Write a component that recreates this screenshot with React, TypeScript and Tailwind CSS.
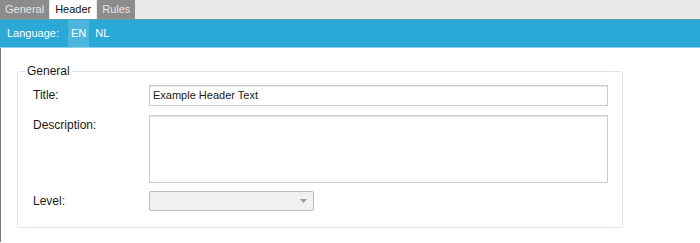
import React from 'react';

const tabs = ['General', 'Header', 'Rules'];

const App: React.FC = () => {
  const active = 'Header';

  return (
    <div className="w-[700px] h-[243px] bg-white overflow-hidden text-[12px] text-[#1a1a1a]" style={{ fontFamily: '"Liberation Sans", Arial, sans-serif' }}>
      {/* tab strip */}
      <div className="h-[20px] bg-[#e9e9e9] flex items-end border-b border-[#5f9fb8]">
        {tabs.map((tab) => (
          <div
            key={tab}
            className={
              tab === active
                ? 'h-[19px] px-[5px] bg-white text-[#111] flex items-center text-[11px] mr-[1px]'
                : 'h-[19px] px-[5px] bg-[#8c8c8c] text-[#e6e6e6] flex items-center text-[11px] mr-[1px]'
            }
          >
            {tab}
          </div>
        ))}
      </div>

      {/* language bar */}
      <div className="h-[28px] bg-[#2aa8d6] border-b border-[#8fd0ea] flex items-stretch text-white text-[11px]">
        <span className="flex items-center pl-[7px] pr-[9px]">Language:</span>
        <span className="flex items-center px-[3px] bg-[#4cb6de]">EN</span>
        <span className="flex items-center px-[6px]">NL</span>
      </div>

      {/* content */}
      <div className="border-l border-[#7a7a7a] h-[194px] pl-[16px] pt-[14px]">
        <fieldset className="w-[605px] h-[166px] border border-[#e0e4e9] rounded-[3px] pl-[15px] pr-[14px] pt-[2px] m-0">
          <legend className="ml-[-8px] px-[2px] text-[#1a1a1a]">General</legend>

          <div className="flex items-center h-[20px] mt-[3px]">
            <label className="w-[116px]">Title:</label>
            <div className="w-[459px] h-[21px] border border-[#c9ccd0] bg-white flex items-center px-[3px] text-[11px] shadow-[inset_0_1px_0_#e6e6e6]">
              Example Header Text
            </div>
          </div>

          <div className="flex items-start mt-[10px]">
            <label className="w-[116px] pt-[1px]">Description:</label>
            <div className="w-[459px] h-[68px] border border-[#c9ccd0] bg-white shadow-[inset_0_1px_0_#e6e6e6]" />
          </div>

          <div className="flex items-center mt-[8px]">
            <label className="w-[116px]">Level:</label>
            <div className="w-[165px] h-[20px] border border-[#b9bcc0] rounded-[2px] bg-[#f0f0f0] flex items-center justify-end pr-[6px]">
              <svg width="7" height="4" viewBox="0 0 7 4">
                <path d="M0 0 H7 L3.5 4 Z" fill="#9a9a9a" />
              </svg>
            </div>
          </div>
        </fieldset>
      </div>
    </div>
  );
};

export default App;
